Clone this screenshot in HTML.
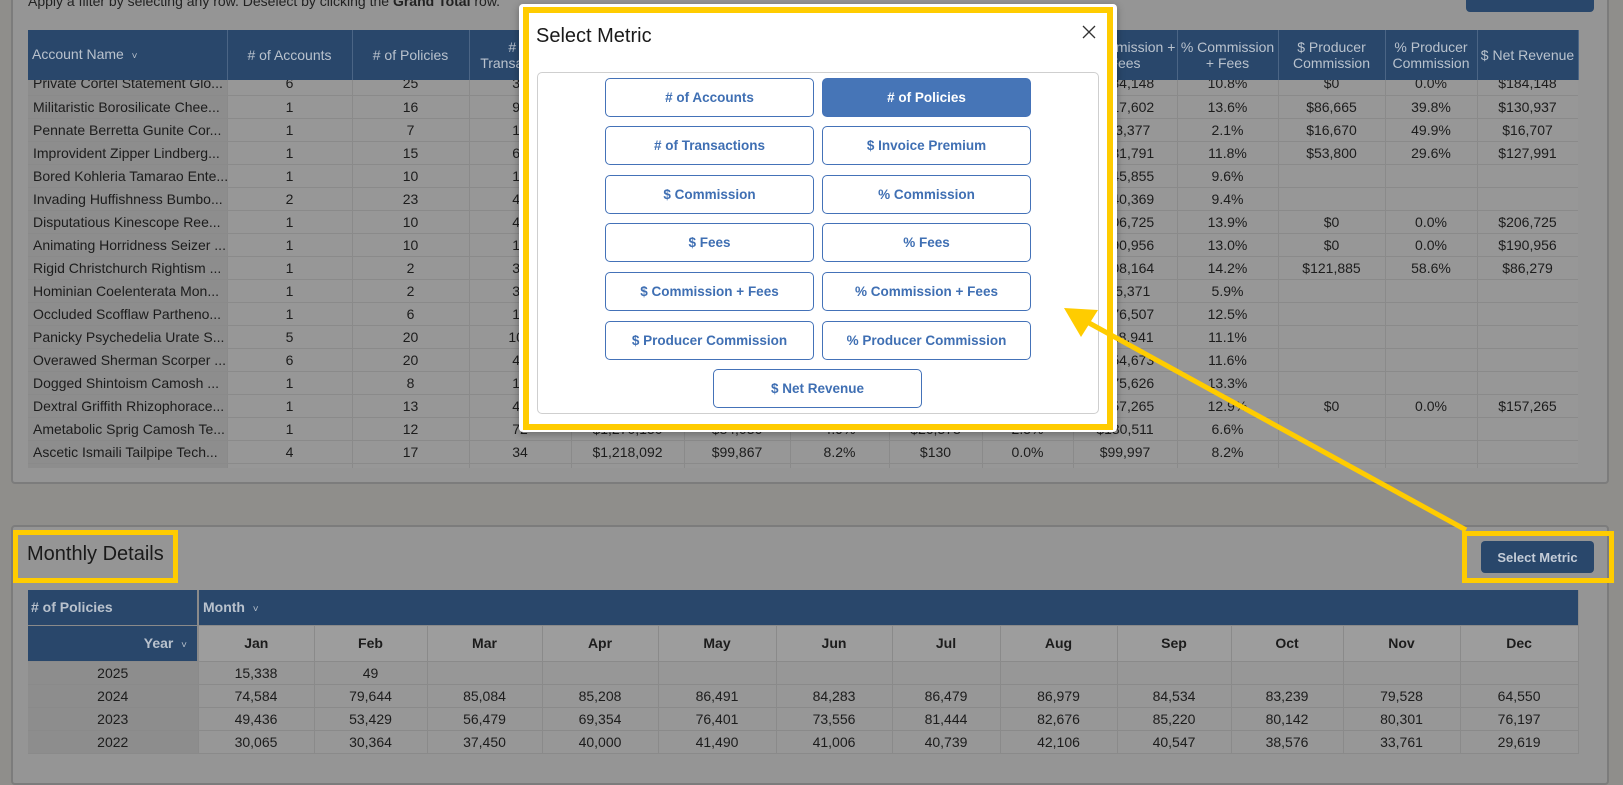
<!DOCTYPE html>
<html><head><meta charset="utf-8"><style>
*{margin:0;padding:0;box-sizing:border-box}
body{width:1623px;height:766px;overflow:hidden;background:#8f8e8b;font-family:"Liberation Sans",sans-serif;position:relative;color:#1c1c1c}
.abs{position:absolute}
.panel{background:#959595;border:2px solid #7c7c7c;border-radius:4px}
table{border-collapse:collapse;table-layout:fixed}
td,th{overflow:hidden;white-space:nowrap;text-align:center;font-size:14px}
.hd th{background:#29476b;color:#b9c2cd;font-weight:normal;height:50px;border-right:1px solid #4b6585;line-height:16px;white-space:normal;font-size:14px}
.bd td{height:23px;border-right:1px solid #8a8a8a;border-bottom:1px solid #8a8a8a;background:#979797}
.bd td:first-child{background:#8d8d8d;text-align:left;padding-left:5px}
.mt td{height:23px;border-right:1px solid #8a8a8a;border-bottom:1px solid #8a8a8a;background:#979797}
.mt td.y{background:#8d8d8d}
.btn{position:absolute;width:209px;height:39px;border:1.5px solid #4472b8;border-radius:5px;background:#fff;color:#3f6fb3;font-weight:bold;font-size:13.5px;display:flex;align-items:center;justify-content:center}
.sel{background:#4675b7;color:#fff}
</style></head><body>

<div class="abs panel" style="left:11px;top:-20px;width:1598px;height:504px"></div>
<div class="abs" style="left:28px;top:-7px;font-size:14px;color:#222">Apply a filter by selecting any row. Deselect by clicking the <b>Grand Total</b> row.</div>
<div class="abs" style="left:1466px;top:-10px;width:128px;height:22px;background:#29476b;border-radius:4px"></div>

<div class="abs" style="left:28px;top:80px;width:1550px;height:388px;overflow:hidden">
<table class="bd" style="position:absolute;top:-8px;left:0;width:1550px">
<colgroup><col style="width:199px"><col style="width:125px"><col style="width:117px"><col style="width:102px"><col style="width:113px"><col style="width:106px"><col style="width:99px"><col style="width:93px"><col style="width:91px"><col style="width:104px"><col style="width:101px"><col style="width:107px"><col style="width:92px"><col style="width:101px"></colgroup>
<tr><td>Private Cortel Statement Glo...</td><td>6</td><td>25</td><td>35</td><td></td><td></td><td></td><td></td><td></td><td>$184,148</td><td>10.8%</td><td>$0</td><td>0.0%</td><td>$184,148</td></tr>
<tr><td>Militaristic Borosilicate Chee...</td><td>1</td><td>16</td><td>92</td><td></td><td></td><td></td><td></td><td></td><td>$217,602</td><td>13.6%</td><td>$86,665</td><td>39.8%</td><td>$130,937</td></tr>
<tr><td>Pennate Berretta Gunite Cor...</td><td>1</td><td>7</td><td>13</td><td></td><td></td><td></td><td></td><td></td><td>$33,377</td><td>2.1%</td><td>$16,670</td><td>49.9%</td><td>$16,707</td></tr>
<tr><td>Improvident Zipper Lindberg...</td><td>1</td><td>15</td><td>64</td><td></td><td></td><td></td><td></td><td></td><td>$181,791</td><td>11.8%</td><td>$53,800</td><td>29.6%</td><td>$127,991</td></tr>
<tr><td>Bored Kohleria Tamarao Ente...</td><td>1</td><td>10</td><td>17</td><td></td><td></td><td></td><td></td><td></td><td>$145,855</td><td>9.6%</td><td></td><td></td><td></td></tr>
<tr><td>Invading Huffishness Bumbo...</td><td>2</td><td>23</td><td>41</td><td></td><td></td><td></td><td></td><td></td><td>$140,369</td><td>9.4%</td><td></td><td></td><td></td></tr>
<tr><td>Disputatious Kinescope Ree...</td><td>1</td><td>10</td><td>43</td><td></td><td></td><td></td><td></td><td></td><td>$206,725</td><td>13.9%</td><td>$0</td><td>0.0%</td><td>$206,725</td></tr>
<tr><td>Animating Horridness Seizer ...</td><td>1</td><td>10</td><td>18</td><td></td><td></td><td></td><td></td><td></td><td>$190,956</td><td>13.0%</td><td>$0</td><td>0.0%</td><td>$190,956</td></tr>
<tr><td>Rigid Christchurch Rightism ...</td><td>1</td><td>2</td><td>31</td><td></td><td></td><td></td><td></td><td></td><td>$208,164</td><td>14.2%</td><td>$121,885</td><td>58.6%</td><td>$86,279</td></tr>
<tr><td>Hominian Coelenterata Mon...</td><td>1</td><td>2</td><td>35</td><td></td><td></td><td></td><td></td><td></td><td>$75,371</td><td>5.9%</td><td></td><td></td><td></td></tr>
<tr><td>Occluded Scofflaw Partheno...</td><td>1</td><td>6</td><td>19</td><td></td><td></td><td></td><td></td><td></td><td>$176,507</td><td>12.5%</td><td></td><td></td><td></td></tr>
<tr><td>Panicky Psychedelia Urate S...</td><td>5</td><td>20</td><td>102</td><td></td><td></td><td></td><td></td><td></td><td>$118,941</td><td>11.1%</td><td></td><td></td><td></td></tr>
<tr><td>Overawed Sherman Scorper ...</td><td>6</td><td>20</td><td>44</td><td></td><td></td><td></td><td></td><td></td><td>$154,673</td><td>11.6%</td><td></td><td></td><td></td></tr>
<tr><td>Dogged Shintoism Camosh ...</td><td>1</td><td>8</td><td>17</td><td></td><td></td><td></td><td></td><td></td><td>$175,626</td><td>13.3%</td><td></td><td></td><td></td></tr>
<tr><td>Dextral Griffith Rhizophorace...</td><td>1</td><td>13</td><td>42</td><td></td><td></td><td></td><td></td><td></td><td>$157,265</td><td>12.9%</td><td>$0</td><td>0.0%</td><td>$157,265</td></tr>
<tr><td>Ametabolic Sprig Camosh Te...</td><td>1</td><td>12</td><td>72</td><td>$1,270,150</td><td>$84,036</td><td>4.9%</td><td>$26,378</td><td>2.5%</td><td>$130,511</td><td>6.6%</td><td></td><td></td><td></td></tr>
<tr><td>Ascetic Ismaili Tailpipe Tech...</td><td>4</td><td>17</td><td>34</td><td>$1,218,092</td><td>$99,867</td><td>8.2%</td><td>$130</td><td>0.0%</td><td>$99,997</td><td>8.2%</td><td></td><td></td><td></td></tr>
<tr><td></td><td></td><td></td><td></td><td></td><td></td><td></td><td></td><td></td><td></td><td></td><td></td><td></td><td></td></tr>
</table>
</div>
<table class="hd abs" style="left:28px;top:30px;width:1550px">
<colgroup><col style="width:199px"><col style="width:125px"><col style="width:117px"><col style="width:102px"><col style="width:113px"><col style="width:106px"><col style="width:99px"><col style="width:93px"><col style="width:91px"><col style="width:104px"><col style="width:101px"><col style="width:107px"><col style="width:92px"><col style="width:101px"></colgroup>
<tr><th style="text-align:left;padding-left:4px">Account Name &nbsp;<span style="font-size:10px">˅</span></th><th># of Accounts</th><th># of Policies</th><th># of Transactions</th><th>$ Invoice Premium</th><th>$ Commission</th><th>% Commission</th><th>$ Fees</th><th>% Fees</th><th>$ Commission + Fees</th><th>% Commission + Fees</th><th>$ Producer Commission</th><th>% Producer Commission</th><th>$ Net Revenue</th></tr>
</table>

<div class="abs panel" style="left:11px;top:525px;width:1598px;height:260px"></div>
<div class="abs" style="left:13px;top:530px;width:165px;height:53px;border:5px solid #ffcc00"></div>
<div class="abs" style="left:27px;top:543px;font-size:20px;color:#1a1a1a">Monthly Details</div>
<div class="abs" style="left:1462px;top:531px;width:152px;height:52px;border:5px solid #ffcc00"></div>
<div class="abs" style="left:1481px;top:541px;width:113px;height:32px;background:#29476b;border-radius:4px;color:#c5cdd8;font-weight:bold;font-size:13px;display:flex;align-items:center;justify-content:center">Select Metric</div>

<table class="mt abs" style="left:28px;top:590px;width:1550px">
<colgroup><col style="width:170px"><col style="width:116px"><col style="width:113px"><col style="width:115px"><col style="width:116px"><col style="width:118px"><col style="width:116px"><col style="width:108px"><col style="width:117px"><col style="width:114px"><col style="width:112px"><col style="width:117px"><col style="width:118px"></colgroup>
<tr><td style="height:35px;background:#29476b;color:#b9c2cd;font-weight:bold;text-align:left;padding-left:3px;border-right:2px solid #8a8a8a">#&nbsp;of Policies</td><td colspan="12" style="height:35px;background:#29476b;color:#b9c2cd;font-weight:bold;text-align:left;padding-left:4px">Month &nbsp;<span style="font-weight:normal;font-size:10px">˅</span></td></tr>
<tr style="font-weight:bold"><td style="height:36px;background:#29476b;color:#b9c2cd;text-align:right;padding-right:10px;border-right:2px solid #8a8a8a">Year &nbsp;<span style="font-weight:normal;font-size:10px">˅</span></td><td style="background:#9d9d9d">Jan</td><td style="background:#9d9d9d">Feb</td><td style="background:#9d9d9d">Mar</td><td style="background:#9d9d9d">Apr</td><td style="background:#9d9d9d">May</td><td style="background:#9d9d9d">Jun</td><td style="background:#9d9d9d">Jul</td><td style="background:#9d9d9d">Aug</td><td style="background:#9d9d9d">Sep</td><td style="background:#9d9d9d">Oct</td><td style="background:#9d9d9d">Nov</td><td style="background:#9d9d9d">Dec</td></tr>
<tr><td class="y">2025</td><td>15,338</td><td>49</td><td></td><td></td><td></td><td></td><td></td><td></td><td></td><td></td><td></td><td></td></tr>
<tr><td class="y">2024</td><td>74,584</td><td>79,644</td><td>85,084</td><td>85,208</td><td>86,491</td><td>84,283</td><td>86,479</td><td>86,979</td><td>84,534</td><td>83,239</td><td>79,528</td><td>64,550</td></tr>
<tr><td class="y">2023</td><td>49,436</td><td>53,429</td><td>56,479</td><td>69,354</td><td>76,401</td><td>73,556</td><td>81,444</td><td>82,676</td><td>85,220</td><td>80,142</td><td>80,301</td><td>76,197</td></tr>
<tr><td class="y">2022</td><td>30,065</td><td>30,364</td><td>37,450</td><td>40,000</td><td>41,490</td><td>41,006</td><td>40,739</td><td>42,106</td><td>40,547</td><td>38,576</td><td>33,761</td><td>29,619</td></tr>
</table>

<!-- Modal -->
<div class="abs" style="left:519px;top:4px;width:598px;height:428px;background:#fff;border-radius:4px;box-shadow:0 2px 8px rgba(0,0,0,.3)"></div>
<div class="abs" style="left:523px;top:7px;width:590px;height:423px;border:6px solid #ffcc00"></div>
<div class="abs" style="left:536px;top:25px;font-size:20px;color:#1a1a1a">Select Metric</div>
<svg class="abs" style="left:1082px;top:25px" width="14" height="14" viewBox="0 0 14 14"><path d="M1 1L13 13M13 1L1 13" stroke="#333" stroke-width="1.3"/></svg>
<div class="abs" style="left:537px;top:72px;width:562px;height:342px;border:1px solid #cfcfcf;border-radius:5px"></div>
<div class="btn" style="left:605px;top:78px"># of Accounts</div>
<div class="btn sel" style="left:822px;top:78px"># of Policies</div>
<div class="btn" style="left:605px;top:126px"># of Transactions</div>
<div class="btn" style="left:822px;top:126px">$ Invoice Premium</div>
<div class="btn" style="left:605px;top:175px">$ Commission</div>
<div class="btn" style="left:822px;top:175px">% Commission</div>
<div class="btn" style="left:605px;top:223px">$ Fees</div>
<div class="btn" style="left:822px;top:223px">% Fees</div>
<div class="btn" style="left:605px;top:272px">$ Commission + Fees</div>
<div class="btn" style="left:822px;top:272px">% Commission + Fees</div>
<div class="btn" style="left:605px;top:321px">$ Producer Commission</div>
<div class="btn" style="left:822px;top:321px">% Producer Commission</div>
<div class="btn" style="left:713px;top:369px">$ Net Revenue</div>

<svg class="abs" style="left:0;top:0" width="1623" height="766">
<line x1="1466" y1="530" x2="1080" y2="318" stroke="#ffcc00" stroke-width="5"/>
<polygon points="1064,308 1098,310 1081,337" fill="#ffcc00"/>
</svg>
</body></html>
